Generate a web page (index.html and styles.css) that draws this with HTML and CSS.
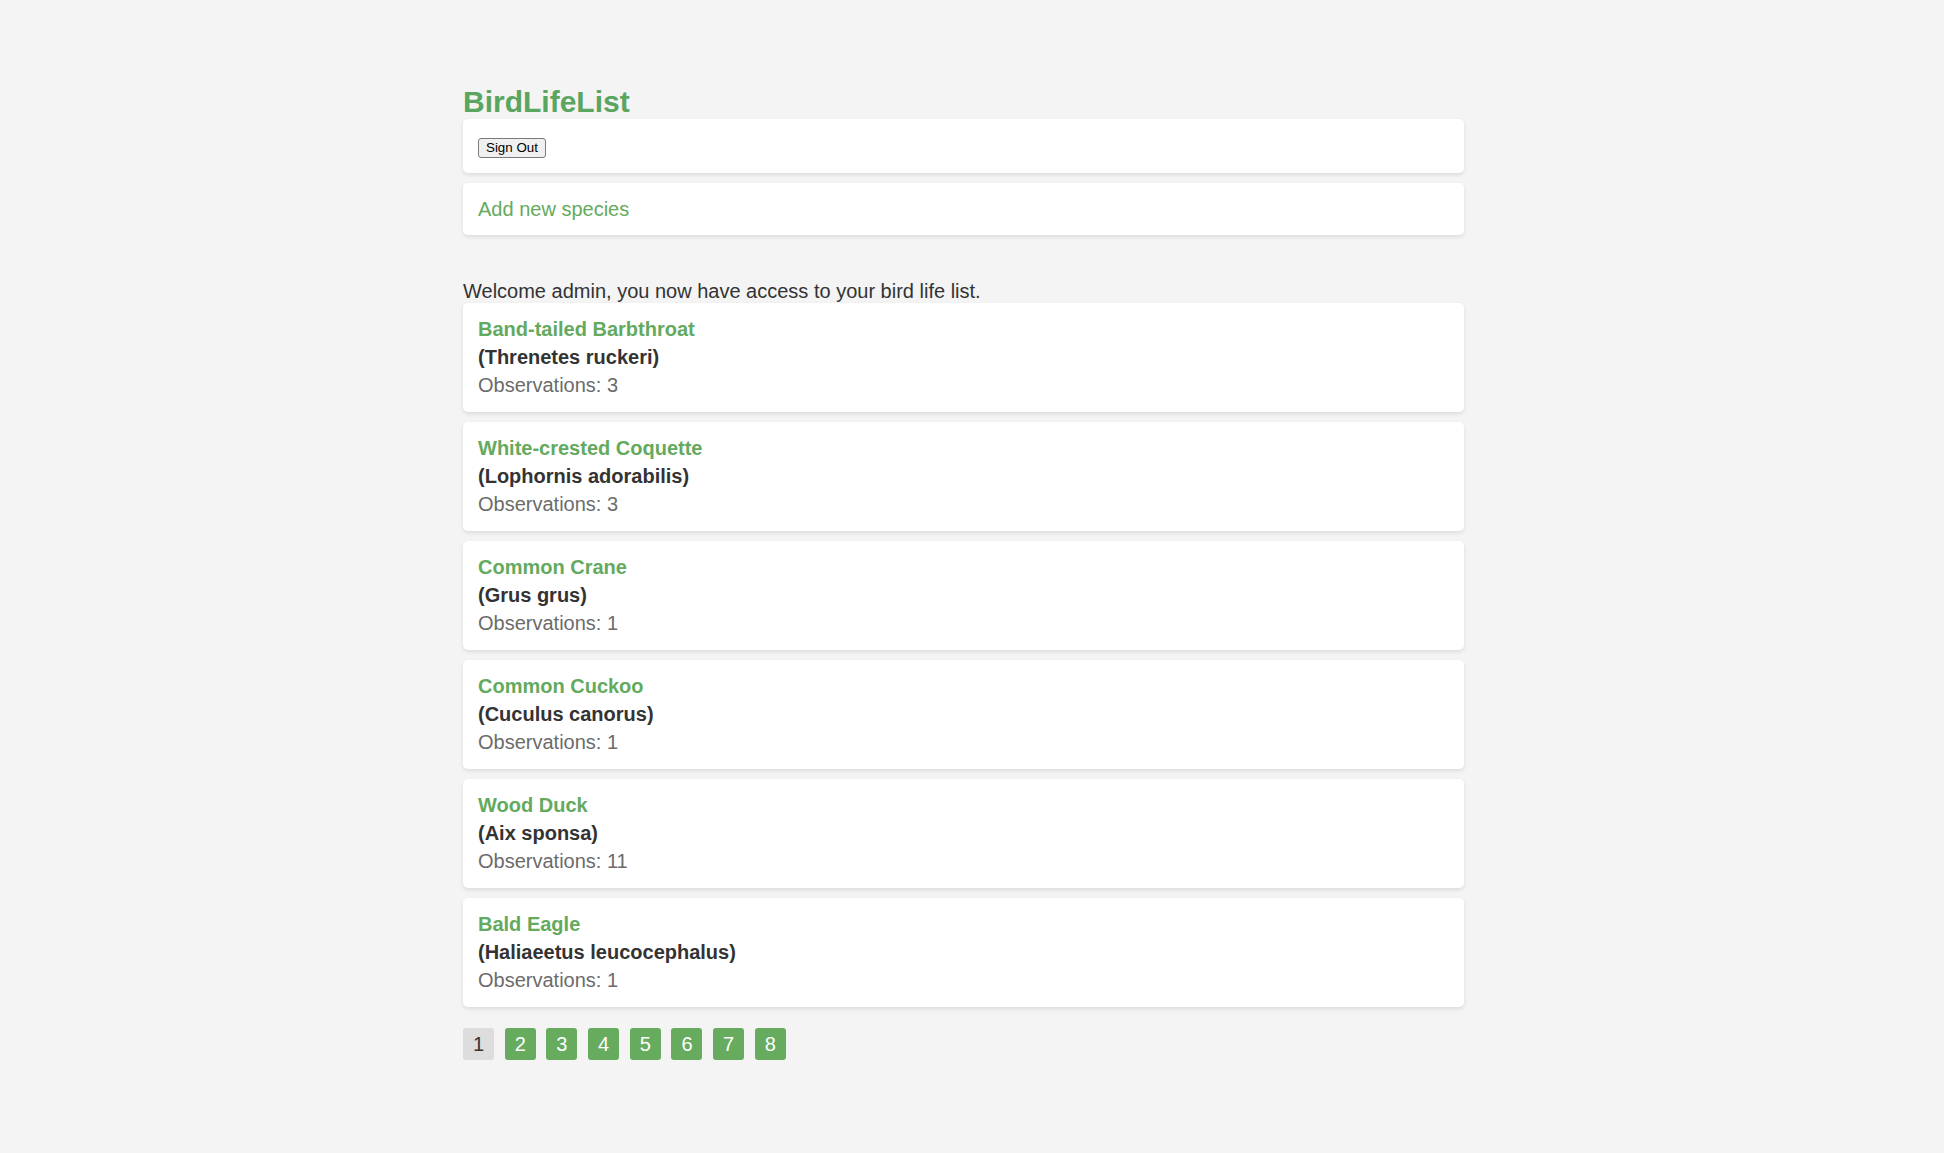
FILE: index.html
```html
<!DOCTYPE html>
<html lang="en">
<head>
<meta charset="utf-8">
<title>BirdLifeList</title>
<link rel="stylesheet" href="styles.css">
</head>
<body>
<div class="page">
  <h1 class="title">BirdLifeList</h1>
  <div class="card bar">
    <button class="signout" type="button">Sign Out</button>
  </div>
  <div class="card bar link-bar">
    <a class="add-link" href="#">Add new species</a>
  </div>
  <p class="welcome">Welcome admin, you now have access to your bird life list.</p>
  <ul class="species-list">
    <li class="card species">
      <a class="common" href="#">Band-tailed Barbthroat</a>
      <div class="sci">(Threnetes ruckeri)</div>
      <div class="obs">Observations: 3</div>
    </li>
    <li class="card species">
      <a class="common" href="#">White-crested Coquette</a>
      <div class="sci">(Lophornis adorabilis)</div>
      <div class="obs">Observations: 3</div>
    </li>
    <li class="card species">
      <a class="common" href="#">Common Crane</a>
      <div class="sci">(Grus grus)</div>
      <div class="obs">Observations: 1</div>
    </li>
    <li class="card species">
      <a class="common" href="#">Common Cuckoo</a>
      <div class="sci">(Cuculus canorus)</div>
      <div class="obs">Observations: 1</div>
    </li>
    <li class="card species">
      <a class="common" href="#">Wood Duck</a>
      <div class="sci">(Aix sponsa)</div>
      <div class="obs">Observations: 11</div>
    </li>
    <li class="card species">
      <a class="common" href="#">Bald Eagle</a>
      <div class="sci">(Haliaeetus leucocephalus)</div>
      <div class="obs">Observations: 1</div>
    </li>
  </ul>
  <nav class="pager">
    <span class="pg current">1</span>
    <a class="pg" href="#">2</a>
    <a class="pg" href="#">3</a>
    <a class="pg" href="#">4</a>
    <a class="pg" href="#">5</a>
    <a class="pg" href="#">6</a>
    <a class="pg" href="#">7</a>
    <a class="pg" href="#">8</a>
  </nav>
</div>
</body>
</html>
```
FILE: styles.css
```css
html, body {
  margin: 0;
  padding: 0;
  background: #f4f4f4;
}
body {
  font-family: "Liberation Sans", Arial, Helvetica, sans-serif;
  font-size: 20px;
  color: #333;
}
.page {
  width: 1001px;
  margin-left: calc(50% - 509px);
  padding-top: 84px;
  padding-bottom: 60px;
}
.title {
  margin: 0;
  font-size: 30px;
  line-height: 35px;
  font-weight: bold;
  color: #5aa55f;
}
.card {
  background: #fff;
  border-radius: 5px;
  box-shadow: 0 2px 4px rgba(0, 0, 0, 0.1);
}
.bar {
  padding: 15px;
  line-height: 24px;
  margin-bottom: 10px;
}
.link-bar {
  line-height: 22px;
}
.signout {
  font-family: "Liberation Sans", Arial, Helvetica, sans-serif;
  font-size: 13.33px;
  color: #000;
  background: #f0f0f0;
  border: 1px solid #7a7a7a;
  border-radius: 3px;
  padding: 1px 7px;
  line-height: 16px;
  margin: 0;
  vertical-align: 1px;
}
.add-link {
  color: #64aa5e;
  text-decoration: none;
}
.welcome {
  margin: 45px 0 0;
  line-height: 23px;
  color: #333;
}
.species-list {
  list-style: none;
  margin: 0;
  padding: 0;
  display: flex;
  flex-direction: column;
  gap: 10px;
}
.species {
  padding: 12px 15px 13px;
  line-height: 28px;
}
.common {
  display: block;
  color: #64aa5e;
  font-weight: bold;
  text-decoration: none;
}
.sci {
  font-weight: bold;
  color: #333;
}
.obs {
  color: #6b6b6b;
}
.pager {
  display: flex;
  gap: 10.7px;
  margin-top: 21px;
}
.pg {
  display: flex;
  align-items: center;
  justify-content: center;
  width: 31px;
  height: 32px;
  border-radius: 3px;
  font-size: 20px;
  background: #66ab5e;
  color: #fff;
  text-decoration: none;
}
.pg.current {
  background: #dddddd;
  color: #333;
}
```
